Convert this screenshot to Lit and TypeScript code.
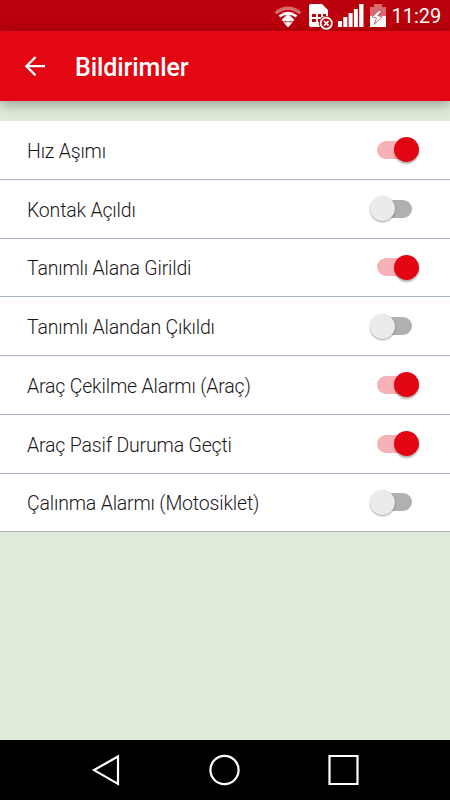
import { LitElement, html, css } from "lit";
import { customElement, property } from "lit/decorators.js";
import { classMap } from "lit/directives/class-map.js";

@customElement("toggle-switch")
class ToggleSwitch extends LitElement {
  @property({ type: Boolean }) on = false;
  static styles = css`
    :host { display: block; width: 50px; height: 26px; }
    .switch { height: 26px; display: flex; align-items: center; justify-content: flex-start; }
    .switch.on { justify-content: flex-end; }
    .track { width: 35px; height: 18px; border-radius: 9px; background: #b0b0b0; margin-left: 7px; display: flex; align-items: center; }
    .on .track { background: #f7b2b7; margin: 0 8px 0 0; justify-content: flex-end; }
    .thumb { flex: none; width: 25px; height: 25px; border-radius: 50%; background: #ebebeb; margin-left: -7.5px; box-shadow: 0 1px 2px rgba(0, 0, 0, 0.38); }
    .on .thumb { background: #e20613; margin: 0 -7px 0 0; box-shadow: 0 2px 2px rgba(0, 0, 0, 0.3); }
  `;
  render() {
    return html`<div class=${classMap({ switch: true, on: this.on })}>
      <div class="track"><div class="thumb"></div></div>
    </div>`;
  }
}

@customElement("app-root")
class AppRoot extends LitElement {
  private items = [
    { label: "Hız Aşımı", on: true },
    { label: "Kontak Açıldı", on: false },
    { label: "Tanımlı Alana Girildi", on: true },
    { label: "Tanımlı Alandan Çıkıldı", on: false },
    { label: "Araç Çekilme Alarmı (Araç)", on: true },
    { label: "Araç Pasif Duruma Geçti", on: true },
    { label: "Çalınma Alarmı (Motosiklet)", on: false },
  ];
  static styles = css`
    :host { display: flex; flex-direction: column; width: 450px; height: 800px; overflow: hidden; background: #dfead9; font-family: Roboto, sans-serif; }
    svg { display: block; flex: none; }
    .status { flex: none; height: 31px; display: flex; background: linear-gradient(#b9000c 0 29px, #c9030e 31px); color: #fff; }
    .icons { margin-left: 270px; }
    .clock { margin-left: 1.5px; font-size: 20px; line-height: 33px; white-space: nowrap; }
    .bar { flex: none; height: 70px; display: flex; align-items: center; background: #e30613; color: #fff; box-shadow: 0 3px 12px rgba(0, 0, 0, 0.34); }
    .back { margin-left: 24px; }
    .title { margin: 3px 0 0 29px; font-size: 25px; letter-spacing: -0.09px; font-weight: 500; line-height: 32px; }
    .list { margin-top: 20px; flex: none; }
    .row { box-sizing: border-box; height: 58.75px; padding: 0 30px 0 27px; display: flex; align-items: center; justify-content: space-between; background: #fff; border-bottom: 1px solid #a7b4c2; }
    .label { font-size: 19.5px; letter-spacing: -0.18px; font-weight: 300; line-height: 26px; color: #1c1718; padding-top: 4px; white-space: nowrap; }
    .nav { flex: none; height: 60px; margin-top: auto; background: #000; }
  `;
  render() {
    return html`
      <div class="status">
        <svg class="icons" width="120" height="31" viewBox="270 0 120 31">
          <path d="M275.6 13.2Q288 3.2 300.4 13.2" fill="none" stroke="#fff" stroke-opacity=".42" stroke-width="3.4" />
          <path d="M279.5 16.6Q288 9.6 296.5 16.6" fill="none" stroke="#fff" stroke-width="2.6" />
          <path d="M288 12.5l6.3 7.5-1.8 1.5h-9l-1.8-1.5Z" fill="#fff" />
          <path d="M283.5 22.3h9L288 27.5Z" fill="#fff" />
          <path d="M284 17.8l2.7-2.8M292 17.8l-2.7-2.8M285.5 20.5v1.8M290.5 20.5v1.8" stroke="#c9404a" stroke-width=".8" />
          <path d="M311 4h11l6 6v15a2 2 0 0 1-2 2h-15a2 2 0 0 1-2-2V6a2 2 0 0 1 2-2Z" fill="#fff" />
          <path d="M312 14h4v3h-4zM318 14h3v3h-3zM323 14h3v2h-3zM312 19h4v3h-4zM318 19h2v3h-2z" fill="#ba000d" />
          <circle cx="326.3" cy="23.3" r="7.4" fill="#ba000d" />
          <circle cx="326.3" cy="23.3" r="5.6" fill="#ba000d" stroke="#fff" stroke-width="1.8" />
          <path d="M324 21l4.6 4.6m0-4.6l-4.6 4.6" stroke="#fff" stroke-width="1.7" />
          <path d="M338 21h4v6h-4zM343.3 17h4v10h-4zM348.6 13h4v14h-4zM353.9 9h4v18h-4zM359.2 4h4.3v23h-4.3z" fill="#fff" />
          <path d="M374 4h8v3h4v9h-16V7h4Z" fill="#fff" fill-opacity=".42" />
          <path d="M370 16h16v11h-16Z" fill="#fff" />
          <path d="M379 10.5l-6.8 6.3 4.3 1.3-2.3 6.2 8-7.5-4.4-1.2 4.3-5.1Z" fill="#fff" stroke="#bd454e" stroke-width=".8" />
        </svg>
        <span class="clock">11:29</span>
      </div>
      <div class="bar">
        <svg class="back" width="22" height="22" viewBox="0 0 22 22">
          <path d="M21 11.2H3M11.6 2L2.4 11.2L11.6 20.4" fill="none" stroke="#fff" stroke-width="2.3" />
        </svg>
        <div class="title">Bildirimler</div>
      </div>
      <div class="list">
        ${this.items.map(
          (i) => html`<div class="row">
            <span class="label">${i.label}</span><toggle-switch ?on=${i.on}></toggle-switch>
          </div>`
        )}
      </div>
      <svg class="nav" width="450" height="60" viewBox="0 740 450 60" fill="none" stroke="#fff" stroke-width="2.2">
        <path d="M118 756.5v27.4L94 770.1Z" />
        <circle cx="224.5" cy="770" r="14.1" />
        <path d="M329.5 756h28v28h-28Z" />
      </svg>
    `;
  }
}
